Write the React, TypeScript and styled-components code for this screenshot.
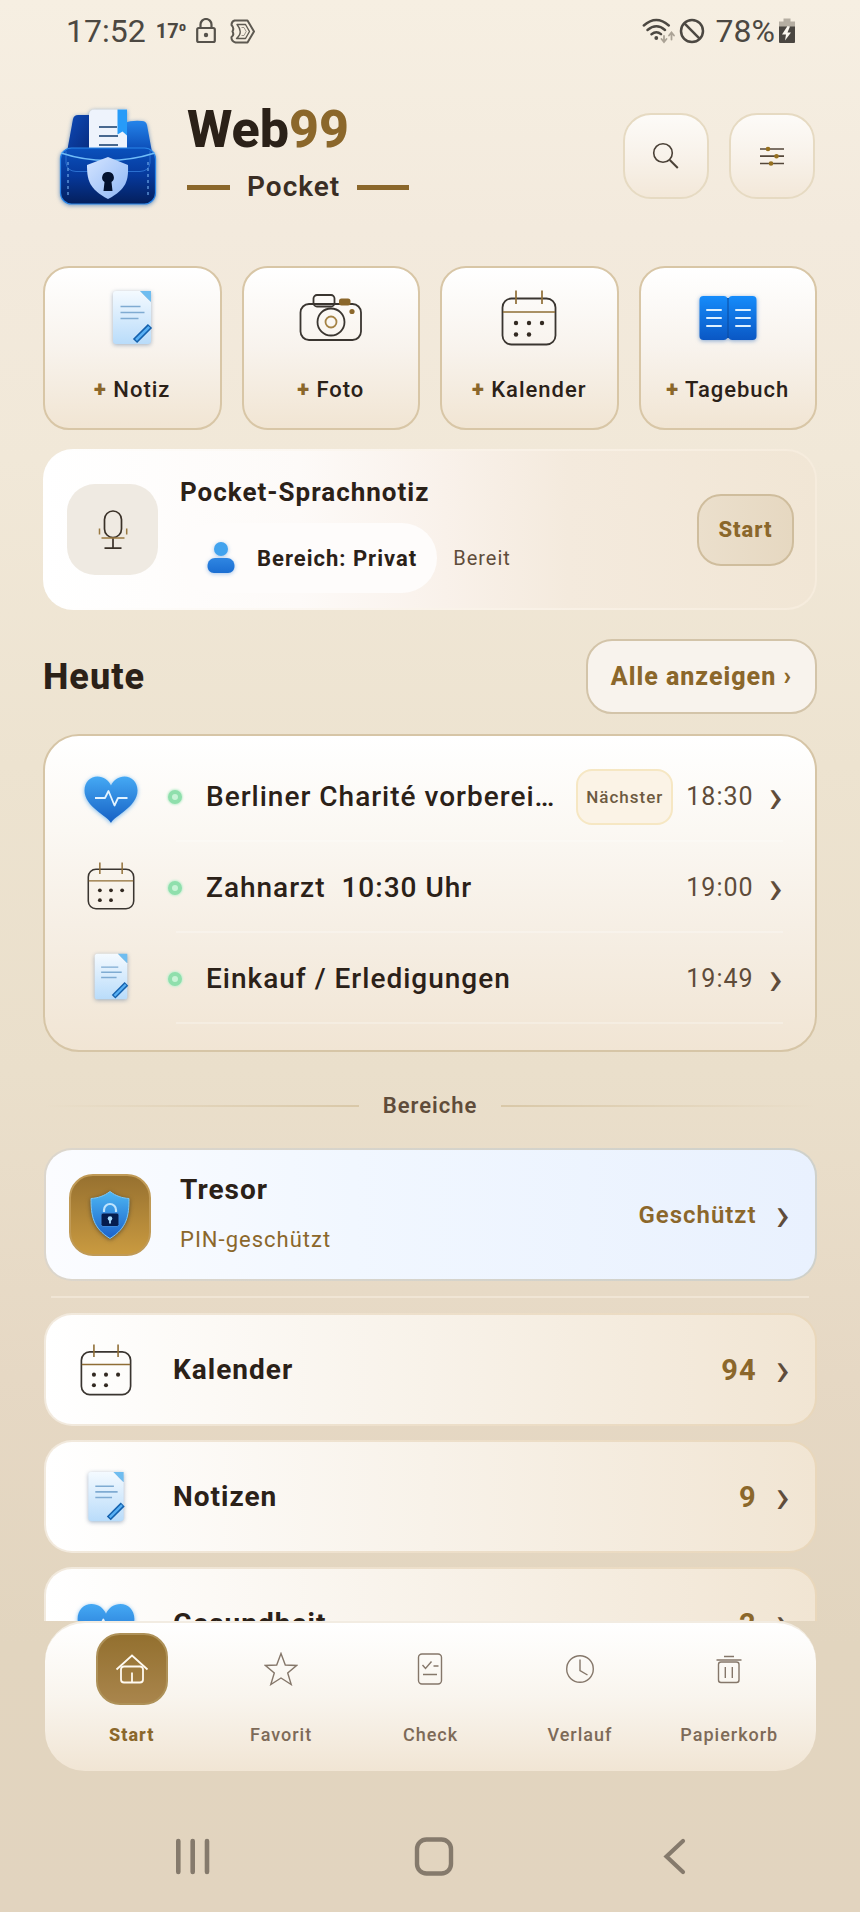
import React from "react";
import styled, { createGlobalStyle, css } from "styled-components";

const ink = "#2b2118";
const brown = "#5f4c3a";
const gold = "#8b672b";

const GlobalStyle = createGlobalStyle`
  * { box-sizing: border-box; }
  html, body { margin: 0; padding: 0; }
  body {
    font-family: Roboto, "Liberation Sans", sans-serif;
    color: ${ink};
    -webkit-font-smoothing: antialiased;
  }
  button, a { font: inherit; color: inherit; letter-spacing: inherit; text-decoration: none; }
  button { border: 0; padding: 0; background: none; cursor: pointer; }
  ul { list-style: none; margin: 0; padding: 0; }
  h1, h2, h3, p { margin: 0; font: inherit; }
  svg { display: block; flex: none; }
`;

const Screen = styled.div`
  height: 100vh;
  display: flex;
  flex-direction: column;
  letter-spacing: 1px;
  background: linear-gradient(#f6efe2 0%, #f3eadd 12%, #f1e8d8 24%, #ede3d0 40%, #eadfcb 56%, #e6d8c4 72%, #e2d5bf 86%, #e2d4bf 100%);
`;

/* ---------- status bar ---------- */

const StatusBar = styled.div`
  flex: none;
  display: flex;
  justify-content: space-between;
  align-items: center;
  height: 62px;
  padding: 0 64px 0 66px;
  color: #4c4842;
  letter-spacing: 0;
`;

const StatusGroup = styled.div<{ $gap: number }>`
  display: flex;
  align-items: center;
  gap: ${(p) => p.$gap}px;
`;

const StatusText = styled.span`
  font-size: 32px;
  line-height: 40px;
`;

const StatusTemp = styled.span`
  font-size: 20px;
  line-height: 32px;
  font-weight: 700;
`;

/* ---------- scrolling content ---------- */

const Content = styled.main`
  flex: 1;
  min-height: 0;
  overflow: hidden;
  padding: 0 43px;
`;

const Header = styled.header`
  display: flex;
  align-items: center;
  height: 188px;
`;

const Brand = styled.div`
  flex: 1;
  display: flex;
  align-items: center;
  gap: 25px;
  padding-left: 7px;
`;

const BrandName = styled.h1`
  font-size: 52px;
  line-height: 62px;
  font-weight: 800;
  letter-spacing: 0;
  span { color: ${gold}; }
`;

const BrandSub = styled.p`
  display: flex;
  align-items: center;
  gap: 17px;
  font-size: 28px;
  line-height: 52px;
  font-weight: 600;
  color: #3a2e24;
`;

const Dash = styled.span<{ $w: number }>`
  width: ${(p) => p.$w}px;
  height: 5px;
  background: ${gold};
`;

const HeaderActions = styled.div`
  display: flex;
  gap: 20px;
  padding-right: 2px;
`;

const IconButton = styled.button`
  width: 86px;
  height: 86px;
  display: grid;
  place-items: center;
  border: 2px solid #e6dac2;
  border-radius: 28px;
  background: linear-gradient(#fdfbf8, #f8f2ea 50%, #f3e8d9);
`;

const QuickGrid = styled.div`
  display: grid;
  grid-template-columns: repeat(4, 1fr);
  gap: 20px;
  margin-top: 16px;
`;

const QuickCard = styled.button`
  display: flex;
  flex-direction: column;
  align-items: center;
  gap: 28px;
  height: 164px;
  padding-top: 22px;
  border: 2px solid #d8c6a6;
  border-radius: 26px;
  background: linear-gradient(#ffffff, #f8f3ed 50%, #f1e5d3);
  font-size: 22px;
  line-height: 32px;
  font-weight: 500;
  b { color: ${gold}; font-weight: 900; }
`;

const IconSlot = styled.span<{ $w?: number }>`
  flex: none;
  width: ${(p) => p.$w || 64}px;
  height: 56px;
  display: grid;
  place-items: center;
`;

const VoiceCard = styled.section`
  display: flex;
  align-items: center;
  height: 161px;
  margin-top: 19px;
  padding: 0 21px 0 22px;
  border: 2px solid transparent;
  border-radius: 30px;
  background:
    linear-gradient(90deg, #ffffff, #fdfaf8 33%, #f9f1ea 52%, #f4eadd 68%, #f1e6d5) padding-box,
    linear-gradient(90deg, #ffffff, #faf3ea 50%, #f6ecdd) border-box;
`;

const MicTile = styled.div`
  flex: none;
  width: 91px;
  height: 91px;
  display: grid;
  place-items: center;
  border-radius: 28px;
  background: #efeae2;
`;

const VoiceBody = styled.div`
  flex: 1;
  padding: 10px 0 0 22px;
`;

const VoiceTitle = styled.h2`
  font-size: 26px;
  line-height: 32px;
  font-weight: 700;
`;

const VoiceMeta = styled.div`
  display: flex;
  align-items: center;
  gap: 16px;
  margin-top: 15px;
  font-size: 20px;
  color: ${brown};
`;

const AreaPill = styled.button`
  display: flex;
  align-items: center;
  gap: 20px;
  height: 70px;
  padding: 0 20px 0 25px;
  border-radius: 35px;
  background: #fefcfb;
  font-size: 22px;
  font-weight: 700;
  color: ${ink};
`;

const StartButton = styled.button`
  width: 97px;
  height: 72px;
  border: 2px solid #cfbd9d;
  border-radius: 24px;
  background: linear-gradient(90deg, #ebdfcc, #e6d8c1);
  font-size: 22px;
  font-weight: 800;
  color: ${gold};
`;

const SectionHead = styled.div`
  display: flex;
  align-items: center;
  justify-content: space-between;
  margin-top: 29px;
`;

const SectionTitle = styled.h2`
  font-size: 36px;
  line-height: 44px;
  font-weight: 800;
`;

const AllLink = styled.a`
  display: flex;
  align-items: center;
  height: 75px;
  padding: 0 23px;
  border: 2px solid #d3c4a9;
  border-radius: 26px;
  background: #f8f3ed;
  font-size: 25px;
  font-weight: 800;
  color: ${gold};
  white-space: pre;
`;

const TodayList = styled.ul`
  margin-top: 20px;
  padding: 15px 32px 26px 26px;
  border: 2px solid #d6c5a6;
  border-radius: 36px;
  background: linear-gradient(#ffffff, #fbf8f3 30%, #f6efe5 60%, #f1e5d4);
`;

const TodayRow = styled.a`
  position: relative;
  display: flex;
  align-items: center;
  height: 91px;
  &::after {
    content: "";
    position: absolute;
    left: 105px;
    right: 0;
    bottom: 0;
    height: 2px;
    background: #ffffff;
    opacity: 0.25;
  }
`;

const TodayIcon = styled(IconSlot)`
  padding-bottom: 4px;
`;

const StatusDot = styled.span`
  flex: none;
  width: 14px;
  height: 14px;
  margin: 0 24px 0 17px;
  border: 4px solid #8fdfac;
  border-radius: 50%;
  background: #c8f3d6;
  box-shadow: 0 0 2px 1px #c5efd2;
`;

const TodayTitle = styled.span`
  flex: 1;
  min-width: 0;
  overflow: hidden;
  text-overflow: ellipsis;
  white-space: pre;
  font-size: 28px;
  line-height: 40px;
  font-weight: 500;
`;

const NextBadge = styled.span`
  display: flex;
  align-items: center;
  height: 56px;
  margin-left: 16px;
  padding: 0 8px;
  border: 2px solid #f6e7c3;
  border-radius: 16px;
  background: #fbf3e6;
  font-size: 17px;
  font-weight: 500;
  color: #6d5a41;
`;

const Time = styled.time`
  margin-left: 13px;
  font-size: 25px;
  line-height: 32px;
  color: ${brown};
`;

const Chevron = styled.span`
  font-size: 48px;
  line-height: 48px;
  font-weight: 400;
  letter-spacing: 0;
  color: ${brown};
`;

const TimeChevron = styled(Chevron)`
  margin-left: 15px;
`;

const AreaDivider = styled.div`
  display: flex;
  align-items: center;
  gap: 24px;
  height: 96px;
  padding-top: 11px;
  font-size: 22px;
  line-height: 32px;
  font-weight: 600;
  color: ${brown};
`;

const FadeLine = styled.span<{ $to: "left" | "right" }>`
  flex: 1;
  height: 2px;
  background: linear-gradient(to ${(p) => p.$to}, #d9c8a8, #d9c8a800);
`;

const rowCard = css`
  display: flex;
  align-items: center;
  margin: 0 0 0 1px;
  border: 2px solid transparent;
  border-radius: 28px;
`;

const VaultCard = styled.a`
  ${rowCard}
  height: 133px;
  padding: 0 25px 0 23px;
  background:
    linear-gradient(90deg, #fbfcff, #f1f7ff 40%, #e9f1fe) padding-box,
    linear-gradient(90deg, #dcd6cc, #cfd1cb) border-box;
`;

const VaultTile = styled.span`
  flex: none;
  width: 82px;
  height: 82px;
  display: grid;
  place-items: center;
  border: 2px solid #c09a56;
  border-radius: 24px;
  background: linear-gradient(#977130, #c99a40);
`;

const VaultBody = styled.span`
  flex: 1;
  display: flex;
  flex-direction: column;
  gap: 16px;
  padding: 0 0 2px 29px;
`;

const VaultNote = styled.span`
  font-size: 22px;
  line-height: 32px;
  font-weight: 400;
  color: ${gold};
`;

const VaultState = styled.span`
  font-size: 24px;
  font-weight: 600;
  color: ${gold};
`;

const SoftRule = styled.hr`
  height: 2px;
  margin: 15px 8px;
  border: 0;
  background: #f0e5d5;
`;

const AreaList = styled.ul`
  display: flex;
  flex-direction: column;
  gap: 14px;
`;

const AreaCard = styled.a`
  ${rowCard}
  height: 113px;
  padding: 0 25px 0 30px;
  background:
    linear-gradient(90deg, #ffffff, #f8f2e9 50%, #f1e5d3) padding-box,
    linear-gradient(90deg, #f2eade, #eddfca 50%, #e9d7bb) border-box;
`;

const AreaName = styled.span<{ $indent?: number }>`
  flex: 1;
  padding-left: ${(p) => p.$indent || 0}px;
  font-size: 28px;
  line-height: 36px;
  font-weight: 700;
`;

const Count = styled.span`
  font-size: 29px;
  line-height: 36px;
  font-weight: 700;
  color: ${gold};
`;

const RowChevron = styled(Chevron)`
  margin-left: 19px;
`;

/* ---------- bottom bars ---------- */

const TabBar = styled.nav`
  flex: none;
  display: grid;
  grid-template-columns: repeat(5, 1fr);
  height: 150px;
  margin: 0 44px 0 45px;
  padding: 10px 12px 0;
  border-top: 2px solid #f2ece2;
  border-radius: 40px;
  background: linear-gradient(#ffffff, #f9f5ee 50%, #f1e5d4);
`;

const Tab = styled.a<{ $active?: boolean }>`
  display: flex;
  flex-direction: column;
  align-items: center;
  gap: 18px;
  font-size: 18px;
  line-height: 24px;
  font-weight: ${(p) => (p.$active ? 800 : 500)};
  color: ${(p) => (p.$active ? gold : "#7d6a58")};
`;

const TabIcon = styled.span<{ $active?: boolean }>`
  width: 72px;
  height: 72px;
  display: grid;
  place-items: center;
  border-radius: 24px;
  ${(p) =>
    p.$active &&
    css`
      border: 2px solid #ae9158;
      background: linear-gradient(#93702f, #a9854c);
    `}
`;

const SystemBar = styled.div`
  flex: none;
  display: flex;
  justify-content: space-between;
  align-items: center;
  height: 141px;
  padding: 28px 165px 0 173px;
`;

const SystemButton = styled.button`
  width: 40px;
  height: 40px;
`;

/* ---------- icons ---------- */

const CalendarIcon = ({ size = 56 }: { size?: number }) => (
  <svg width={size} height={size} viewBox="0 0 56 56" fill="none" aria-hidden="true">
    <rect x="1.5" y="8.5" width="53" height="46" rx="9" stroke="#3a3530" strokeWidth="1.8" />
    <path d="M2 22h52M15 .5v13.5M41 .5v13.5" stroke="#8f6d35" strokeWidth="1.7" />
    <g fill="#332a22">
      <circle cx="15" cy="33" r="2.2" />
      <circle cx="28" cy="33" r="2.2" />
      <circle cx="41" cy="33" r="2.2" />
      <circle cx="15" cy="44.5" r="2.2" />
      <circle cx="28" cy="44.5" r="2.2" />
    </g>
  </svg>
);

const Shaded = styled.svg<{ $glow: string }>`
  overflow: visible;
  filter: drop-shadow(0 1px 2px ${(p) => p.$glow});
`;

const NoteIcon = ({ size = 56 }: { size?: number }) => (
  <Shaded $glow="rgba(60,90,130,.45)" width={size} height={size} viewBox="0 0 56 56" aria-hidden="true">
    <defs>
      <linearGradient id="paper" x1="0" y1="0" x2="0" y2="1">
        <stop offset="0" stopColor="#f4faff" />
        <stop offset="1" stopColor="#b9dcfa" />
      </linearGradient>
    </defs>
    <path d="M12 1h24l11 11v39a3 3 0 0 1-3 3H12a3 3 0 0 1-3-3V4a3 3 0 0 1 3-3z" fill="url(#paper)" />
    <path d="M36 1h11v11z" fill="#6fbdf0" />
    <path d="M16.5 16.5h20M16.5 22.5h24M16.5 28.5h18" stroke="#7fabd2" strokeWidth="1.7" />
    <path d="M31 51L46 36" stroke="#1360ac" strokeWidth="6" />
    <path d="M32 50L45.2 36.8" stroke="#58b0f4" strokeWidth="2.6" />
  </Shaded>
);

const CameraIcon = () => (
  <svg width="64" height="50" viewBox="0 0 64 50" fill="none" stroke="#3a3530" strokeWidth="1.8" aria-hidden="true">
    <rect x="1.5" y="11" width="60.5" height="36" rx="8.5" />
    <rect x="14.5" y="2" width="21" height="11.5" rx="3.5" />
    <circle cx="32" cy="29" r="13.5" />
    <circle cx="32" cy="29" r="5.5" stroke="#a58345" />
    <rect x="40" y="5.5" width="11.5" height="7" rx="2.5" fill="#8b672b" stroke="none" />
    <circle cx="53" cy="18.5" r="2.6" fill="#8b672b" stroke="none" />
  </svg>
);

const BookIcon = () => (
  <Shaded $glow="rgba(20,90,180,.5)" width="58" height="46" viewBox="0 0 58 46" aria-hidden="true">
    <defs>
      <linearGradient id="book" x1="0" y1="0" x2="0" y2="1">
        <stop offset="0" stopColor="#168cfb" />
        <stop offset="1" stopColor="#0a57c4" />
      </linearGradient>
    </defs>
    <rect x="27" y="3" width="4" height="40" fill="#0b4a9e" />
    <rect x="0.5" y="1" width="28" height="44" rx="4" fill="url(#book)" />
    <rect x="29.5" y="1" width="28" height="44" rx="4" fill="url(#book)" />
    <path d="M8 15h14M8 23h14M8 31h14M37 15h14M37 23h14M37 31h14" stroke="#dff1ff" strokeWidth="2" strokeLinecap="round" />
  </Shaded>
);

const HeartIcon = ({ size = 56 }: { size?: number }) => (
  <Shaded $glow="rgba(70,160,235,.7)" width={size} height={size} viewBox="0 -3 56 56" aria-hidden="true">
    <defs>
      <linearGradient id="heart" x1="0" y1="0" x2="0" y2="1">
        <stop offset="0" stopColor="#45a9f4" />
        <stop offset="1" stopColor="#1560c4" />
      </linearGradient>
    </defs>
    <path d="M28 51C25 44 1.500 35 1.500 18.500C1.500 10 7.500 4.500 14.500 4.500c6 0 11 3.500 13.500 9 2.500-5.500 7.500-9 13.500-9 7 0 13 5.500 13 14C54.500 35 31 44 28 51z" fill="url(#heart)" />
    <path d="M12 26h10l3.500-7 6 14.500 3.500-7.500h9.500" fill="none" stroke="#e2f3ff" strokeWidth="1.8" strokeLinejoin="round" />
  </Shaded>
);

const PersonIcon = () => (
  <Shaded $glow="rgba(40,120,210,.4)" width="32" height="34" viewBox="0 0 32 34" aria-hidden="true">
    <defs>
      <linearGradient id="person" x1="0" y1="0" x2="0" y2="1">
        <stop offset="0" stopColor="#2f86e2" />
        <stop offset="1" stopColor="#1b6ed2" />
      </linearGradient>
    </defs>
    <circle cx="16" cy="8" r="7" fill="#42a3ee" />
    <path d="M10 17h12c4 0 7.500 3 7.500 8 0 4-2.500 7-6.500 7H9c-4 0-6.500-3-6.500-7 0-5 3.500-8 7.500-8z" fill="url(#person)" />
  </Shaded>
);

const MicIcon = () => (
  <svg width="32" height="40" viewBox="0 0 32 40" fill="none" stroke="#3a3128" strokeWidth="1.7" aria-hidden="true">
    <rect x="7.5" y="1" width="17" height="26.5" rx="8.5" />
    <path d="M16 27.500v10.500M7.500 38.200h17" />
    <path d="M4.500 28h23M2.500 18.500v6M29.700 18.500v6" stroke="#9a7a42" strokeWidth="1.5" />
  </svg>
);

const ShieldIcon = () => (
  <Shaded $glow="rgba(40,40,40,.6)" width="42" height="50" viewBox="0 0 42 50" aria-hidden="true">
    <defs>
      <linearGradient id="shield" x1="0" y1="0" x2="0" y2="1">
        <stop offset="0" stopColor="#4db6f2" />
        <stop offset="1" stopColor="#1a62cc" />
      </linearGradient>
    </defs>
    <path d="M21 1.500C27 6 33 8 40 8.500C40 26 38 38 21 48.500C4 38 2 26 2 8.500C9 8 15 6 21 1.500z" fill="url(#shield)" stroke="#7cc7f6" strokeWidth="1" />
    <path d="M15 22v-2a6 6 0 0 1 12 0v2" fill="none" stroke="#bfe4fd" strokeWidth="2.2" />
    <rect x="12" y="23" width="18" height="13.5" rx="2" fill="#051c4e" stroke="#3c87dc" strokeWidth="1" />
    <circle cx="21" cy="28.5" r="2.3" fill="#a8dbff" />
    <path d="M21 28v5.500" stroke="#a8dbff" strokeWidth="1.8" />
  </Shaded>
);

const Logo = () => (
  <Shaded $glow="rgba(40,100,170,.65)" width="112" height="116" viewBox="50 98 112 116" aria-hidden="true">
    <defs>
      <linearGradient id="flapL" x1="0" y1="0" x2="1" y2="1">
        <stop offset="0" stopColor="#0d4ab8" />
        <stop offset="1" stopColor="#082a7c" />
      </linearGradient>
      <linearGradient id="flapR" x1="0" y1="0" x2="0" y2="1">
        <stop offset="0" stopColor="#2484ea" />
        <stop offset="1" stopColor="#0a49b4" />
      </linearGradient>
      <linearGradient id="pouch" x1="0" y1="0" x2="0" y2="1">
        <stop offset="0" stopColor="#0a51bd" />
        <stop offset=".5" stopColor="#06389a" />
        <stop offset="1" stopColor="#041f5c" />
      </linearGradient>
      <linearGradient id="crest" x1="0" y1="0" x2="1" y2="1">
        <stop offset="0" stopColor="#d5e5ff" />
        <stop offset="1" stopColor="#8db6f6" />
      </linearGradient>
    </defs>
    <path d="M67 152l6-33q1-4 5-4h14v37z" fill="url(#flapL)" />
    <path d="M124 152v-29q8-3 18-2q4 0 5 4l5 27z" fill="url(#flapR)" />
    <path d="M94 109.500h33v43H89v-38a5 5 0 0 1 5-5z" fill="#eef3fc" />
    <path d="M117.500 109.500h9.500v26l-4.500-4-5 3z" fill="#279bf8" />
    <path d="M99 127h18M99 136h19M99 145h19" stroke="#48688f" strokeWidth="2" />
    <rect x="60.5" y="148" width="95" height="56" rx="11" fill="url(#pouch)" stroke="#2b86e8" strokeWidth="1.2" />
    <path d="M66 151v12q1 8 10 8.500h64q9-.5 10-8.500v-12" fill="none" stroke="#2a6fd0" strokeWidth="1" />
    <path d="M61 153q46 15 94 0" fill="none" stroke="#70bdf8" strokeWidth="1.6" />
    <path d="M68 162v34M148 162v34" stroke="#6ea8e8" strokeWidth="1.2" strokeDasharray="3 3" />
    <path d="M108 157l20 8c.5 15-1 24-20 34c-19-10-21-19-21-34z" fill="url(#crest)" />
    <path d="M108 172a5.500 5.500 0 0 1 3.500 10l1 9h-9l1-9a5.500 5.500 0 0 1 3.500-10z" fill="#04122f" />
  </Shaded>
);

const SearchIcon = () => (
  <svg width="28" height="28" viewBox="0 0 28 28" fill="none" stroke="#4a4036" aria-hidden="true">
    <circle cx="11" cy="11" r="9.3" strokeWidth="1.6" />
    <path d="M17.800 18l8 8" strokeWidth="2" />
  </svg>
);

const SlidersIcon = () => (
  <svg width="26" height="22" viewBox="0 0 26 22" aria-hidden="true">
    <path d="M1 4h24M1 11.200h24M1 18.500h24" stroke="#54473a" strokeWidth="1.7" />
    <g fill="#96701f">
      <circle cx="9" cy="4" r="2.3" />
      <circle cx="17.5" cy="11.2" r="2.3" />
      <circle cx="12" cy="18.5" r="2.3" />
    </g>
  </svg>
);

const LockIcon = () => (
  <svg width="20" height="26" viewBox="0 0 20 26" fill="none" stroke="#56524b" strokeWidth="2.2" aria-hidden="true">
    <rect x="1.2" y="10" width="17.6" height="14" rx="1.5" />
    <path d="M4.500 10V6.500a5.500 5.500 0 0 1 11 0V10" />
    <circle cx="10" cy="17" r="2.2" fill="#56524b" stroke="none" />
  </svg>
);

const HexIcon = () => (
  <svg width="29" height="25" viewBox="-4 0 29 25" fill="none" stroke="#5d5951" strokeLinejoin="round" aria-hidden="true">
    <path d="M4.500 1.500h13L24 12.500l-6.500 11H5.500Q1 22 1.500 18Q4.500 16 2.500 12.500Q4.500 9 1.500 6Q1.500 2.500 4.500 1.500z" strokeWidth="2" />
    <path d="M7 5.500h8.500L19.500 12.500l-4 7H6.500Q10.500 16 10.200 12.500Q10 9 7 5.500z" strokeWidth="1.4" />
    <path d="M11.500 8.500h2.500l2.200 4-2.200 4h-2.500" strokeWidth="1" opacity=".6" />
  </svg>
);

const WifiIcon = () => (
  <svg width="34" height="26" viewBox="0 0 34 26" fill="none" stroke="#4c4842" strokeWidth="2.4" strokeLinecap="round" aria-hidden="true">
    <path d="M1.800 7.500q12.500-11 25 0M5.500 12q9-7.500 17.500 0M9.500 16.200q5-4 9.500 0" />
    <circle cx="14.3" cy="20" r="1.9" fill="#4c4842" stroke="none" />
    <path d="M22 18v5.500m-2.500-2.500l2.500 3 2.500-3M29.500 21.500v-6m-2.500 2l2.500-3 2.500 3" stroke="#aba396" strokeWidth="1.8" />
  </svg>
);

const BlockIcon = () => (
  <svg width="26" height="26" viewBox="0 0 26 26" fill="none" stroke="#4c4842" strokeWidth="2.5" aria-hidden="true">
    <circle cx="13" cy="13" r="11" />
    <path d="M5.200 5.200l15.600 15.600" />
  </svg>
);

const BatteryIcon = () => (
  <svg width="18" height="26" viewBox="0 0 18 26" aria-hidden="true">
    <path d="M5.500 0.500h7v3H17v6H1v-6h4.500z" fill="#b5aea2" />
    <path d="M1 8.500h16v15.500a1 1 0 0 1-1 1H2a1 1 0 0 1-1-1z" fill="#4a4641" />
    <path d="M9.500 8L4 16.500h4L7 22.500l6-8H9.500l2.500-6z" fill="#fbf7ef" />
  </svg>
);

const HomeIcon = () => (
  <svg width="34" height="32" viewBox="0 0 34 32" fill="none" stroke="#fffaf0" strokeWidth="1.8" aria-hidden="true">
    <path d="M1.500 16.500L17 2.500l15.500 14" />
    <rect x="6" y="13.5" width="22" height="16" rx="3" />
    <path d="M17 19.500v9.500" />
  </svg>
);

const tabStroke = { fill: "none", stroke: "#85776a", strokeWidth: 1.4 };

const StarIcon = () => (
  <svg width="34" height="34" viewBox="0 0 34 34" {...tabStroke} aria-hidden="true">
    <path d="M17 1.500l4.300 11.500 11.200.5-8.800 7.500 3.500 11.500L17 26l-10.200 6.500L10.300 21 1.500 13.500l11.200-.5z" />
  </svg>
);

const CheckIcon = () => (
  <svg width="26" height="34" viewBox="0 0 26 34" {...tabStroke} aria-hidden="true">
    <rect x="1.5" y="2" width="23" height="30" rx="3.5" />
    <path d="M5.500 13l3 3.500 6-7M16.500 14h5M6 22.500h14" />
  </svg>
);

const ClockIcon = () => (
  <svg width="30" height="30" viewBox="0 0 30 30" {...tabStroke} aria-hidden="true">
    <circle cx="15" cy="15" r="13.3" />
    <path d="M15 5.500v11l7.500 4.500" />
  </svg>
);

const TrashIcon = () => (
  <svg width="28" height="30" viewBox="0 0 28 30" {...tabStroke} aria-hidden="true">
    <rect x="3.5" y="8" width="20.5" height="20.5" rx="2.5" />
    <path d="M1.500 6h25M9 2.500h10M10.300 13v11M17.300 13v11" />
  </svg>
);

/* ---------- data ---------- */

const quickActions = [
  { label: "Notiz", icon: <NoteIcon /> },
  { label: "Foto", icon: <CameraIcon /> },
  { label: "Kalender", icon: <CalendarIcon /> },
  { label: "Tagebuch", icon: <BookIcon /> },
];

const today = [
  { title: "Berliner Charité vorbereiten", time: "18:30", next: true, icon: <HeartIcon /> },
  { title: "Zahnarzt  10:30 Uhr", time: "19:00", icon: <CalendarIcon size={48} /> },
  { title: "Einkauf / Erledigungen", time: "19:49", icon: <NoteIcon size={48} /> },
];

const areas = [
  { name: "Kalender", count: 94, icon: <CalendarIcon size={52} /> },
  { name: "Notizen", count: 9, icon: <NoteIcon size={52} /> },
  { name: "Gesundheit", count: 2, icon: <HeartIcon size={60} /> },
];

const tabs = [
  { label: "Start", icon: <HomeIcon />, active: true },
  { label: "Favorit", icon: <StarIcon /> },
  { label: "Check", icon: <CheckIcon /> },
  { label: "Verlauf", icon: <ClockIcon /> },
  { label: "Papierkorb", icon: <TrashIcon /> },
];

export default function App() {
  return (
    <Screen>
      <GlobalStyle />
      <StatusBar>
        <StatusGroup $gap={10}>
          <StatusText>17:52</StatusText>
          <StatusTemp>17⁰</StatusTemp>
          <LockIcon />
          <HexIcon />
        </StatusGroup>
        <StatusGroup $gap={3}>
          <WifiIcon />
          <BlockIcon />
          <StatusText>&nbsp;78%</StatusText>
          <BatteryIcon />
        </StatusGroup>
      </StatusBar>

      <Content>
        <Header>
          <Brand>
            <Logo />
            <div>
              <BrandName>
                Web<span>99</span>
              </BrandName>
              <BrandSub>
                <Dash $w={43} />
                Pocket
                <Dash $w={52} />
              </BrandSub>
            </div>
          </Brand>
          <HeaderActions>
            <IconButton aria-label="Suche">
              <SearchIcon />
            </IconButton>
            <IconButton aria-label="Einstellungen">
              <SlidersIcon />
            </IconButton>
          </HeaderActions>
        </Header>

        <QuickGrid>
          {quickActions.map((a) => (
            <QuickCard key={a.label}>
              <IconSlot>{a.icon}</IconSlot>
              <span>
                <b>+</b> {a.label}
              </span>
            </QuickCard>
          ))}
        </QuickGrid>

        <VoiceCard>
          <MicTile>
            <MicIcon />
          </MicTile>
          <VoiceBody>
            <VoiceTitle>Pocket-Sprachnotiz</VoiceTitle>
            <VoiceMeta>
              <AreaPill>
                <PersonIcon />
                Bereich: Privat
              </AreaPill>
              <span>Bereit</span>
            </VoiceMeta>
          </VoiceBody>
          <StartButton>Start</StartButton>
        </VoiceCard>

        <SectionHead>
          <SectionTitle>Heute</SectionTitle>
          <AllLink href="#alle">Alle anzeigen ›</AllLink>
        </SectionHead>

        <TodayList>
          {today.map((t) => (
            <li key={t.title}>
              <TodayRow href="#termin">
                <TodayIcon $w={80}>{t.icon}</TodayIcon>
                <StatusDot />
                <TodayTitle>{t.title}</TodayTitle>
                {t.next && <NextBadge>Nächster</NextBadge>}
                <Time>{t.time}</Time>
                <TimeChevron>›</TimeChevron>
              </TodayRow>
            </li>
          ))}
        </TodayList>

        <AreaDivider>
          <FadeLine $to="left" />
          <h2>Bereiche</h2>
          <FadeLine $to="right" />
        </AreaDivider>

        <VaultCard href="#tresor">
          <VaultTile>
            <ShieldIcon />
          </VaultTile>
          <VaultBody>
            <AreaName as="h3">Tresor</AreaName>
            <VaultNote>PIN-geschützt</VaultNote>
          </VaultBody>
          <VaultState>Geschützt</VaultState>
          <RowChevron>›</RowChevron>
        </VaultCard>
        <SoftRule />
        <AreaList>
          {areas.map((a) => (
            <li key={a.name}>
              <AreaCard href="#bereich">
                <IconSlot $w={60}>{a.icon}</IconSlot>
                <AreaName $indent={37}>{a.name}</AreaName>
                <Count>{a.count}</Count>
                <RowChevron>›</RowChevron>
              </AreaCard>
            </li>
          ))}
        </AreaList>
      </Content>

      <TabBar>
        {tabs.map((t) => (
          <Tab key={t.label} href="#tab" $active={t.active}>
            <TabIcon $active={t.active}>{t.icon}</TabIcon>
            {t.label}
          </Tab>
        ))}
      </TabBar>

      <SystemBar>
        <SystemButton aria-label="Letzte Apps">
          <svg width="40" height="40" viewBox="0 0 40 40" stroke="#857a6c" strokeWidth="4.6" strokeLinecap="round">
            <path d="M5.300 5v31M19.700 5v31M34 5v31" />
          </svg>
        </SystemButton>
        <SystemButton aria-label="Startbildschirm">
          <svg width="40" height="40" viewBox="0 0 40 40" fill="none" stroke="#857a6c" strokeWidth="4.4">
            <rect x="3" y="3.5" width="34" height="34" rx="9.5" />
          </svg>
        </SystemButton>
        <SystemButton aria-label="Zurück">
          <svg width="40" height="40" viewBox="0 0 40 40" fill="none" stroke="#857a6c" strokeWidth="4.2" strokeLinecap="round">
            <path d="M28 5L11.500 20.500L28 36" />
          </svg>
        </SystemButton>
      </SystemBar>
    </Screen>
  );
}
